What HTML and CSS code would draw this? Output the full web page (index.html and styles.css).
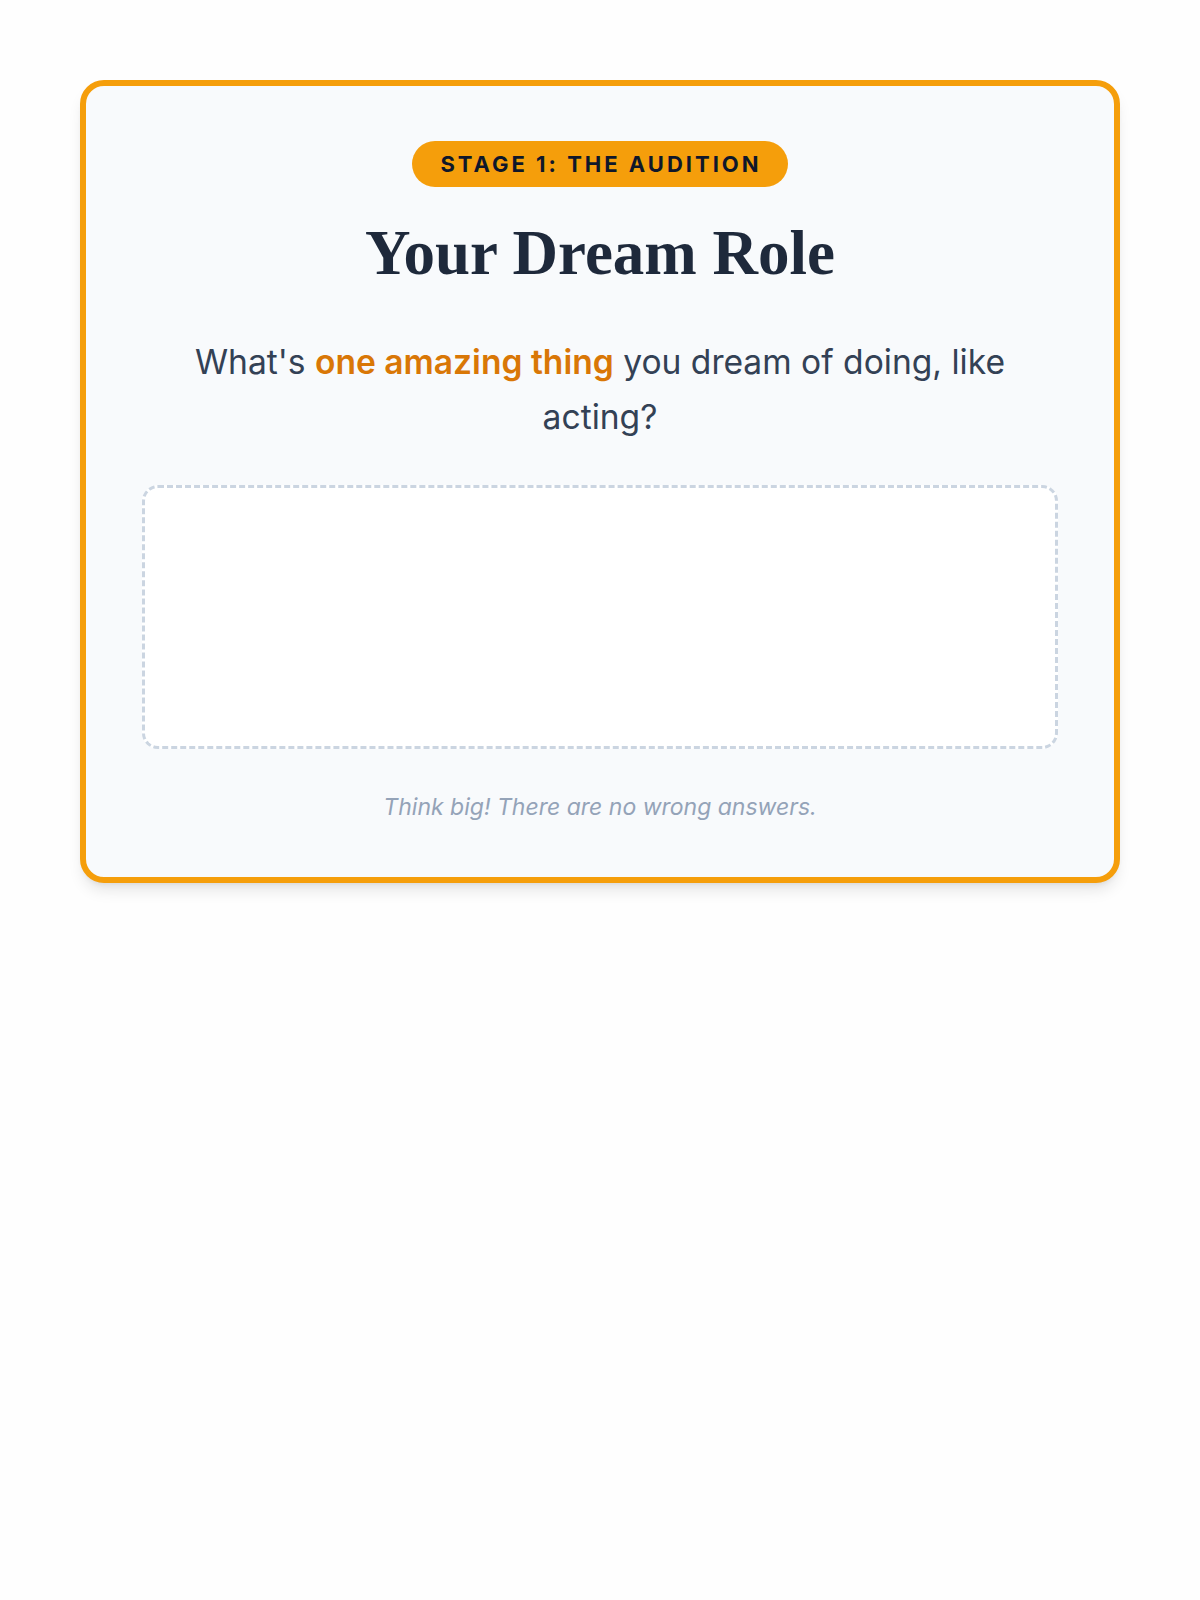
FILE: index.html
```html
<!DOCTYPE html>
<html lang="en">
<head>
  <meta charset="UTF-8" />
  <meta name="viewport" content="width=device-width, initial-scale=1.0"/>
  <title>Stage 1: The Audition</title>
  <link rel="stylesheet" href="styles.css">
</head>
<body>
  <section class="card">
    <span class="badge">Stage 1: The Audition</span>
    <h1>Your Dream Role</h1>
    <p class="question">What's <strong>one amazing thing</strong> you dream of doing, like acting?</p>
    <textarea class="answer" aria-label="Your answer"></textarea>
    <p class="hint">Think big! There are no wrong answers.</p>
  </section>
</body>
</html>
```

FILE: styles.css
```css
* {
  margin: 0;
  padding: 0;
  box-sizing: border-box;
}

body {
  background: #fefefe;
  padding: 80px;
  font-family: Inter, "Noto Sans", sans-serif;
  color: #334155;
}

.card {
  background: #f8fafc;
  border: 6px solid #f59e0b;
  border-radius: 24px;
  padding: 55px 56px 56px;
  text-align: center;
  box-shadow: 0 10px 15px -3px rgba(0, 0, 0, 0.1), 0 4px 6px -4px rgba(0, 0, 0, 0.1);
}

.badge {
  display: inline-block;
  background: #f59e0b;
  color: #0f172a;
  font-size: 22px;
  font-weight: 700;
  line-height: 46px;
  letter-spacing: 3px;
  text-transform: uppercase;
  padding: 0 26px 0 28px;
  border-radius: 999px;
}

h1 {
  font-family: "Liberation Serif", "DejaVu Serif", serif;
  font-size: 63px;
  font-weight: 700;
  line-height: 72px;
  color: #1e293b;
  margin-top: 30px;
}

.question {
  max-width: 860px;
  margin: 45px auto 0;
  font-size: 33.6px;
  line-height: 55px;
}

.question strong {
  color: #d97706;
  font-weight: 600;
}

.answer {
  display: block;
  width: 100%;
  height: 264px;
  margin-top: 41px;
  background: #fff;
  border: 3px dashed #cbd5e1;
  border-radius: 16px;
  resize: none;
  padding: 20px;
  font-family: inherit;
  font-size: 22px;
  color: #334155;
}

.hint {
  font-size: 23px;
  font-style: italic;
  line-height: 28px;
  color: #94a3b8;
  margin-top: 44px;
}
```
